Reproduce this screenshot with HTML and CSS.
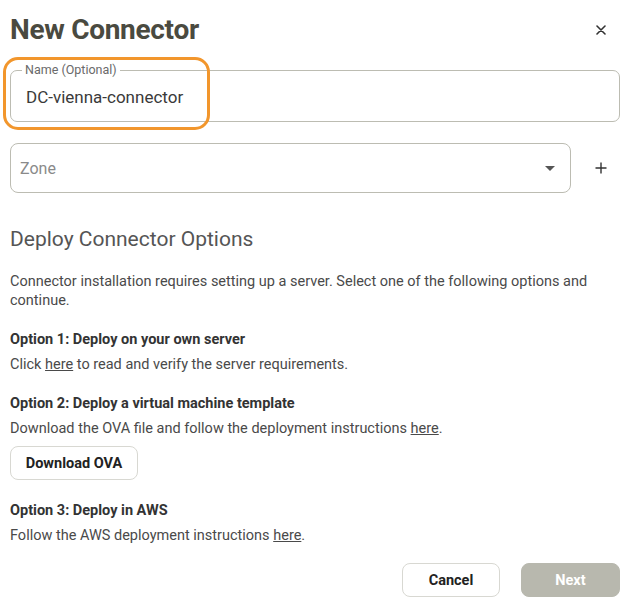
FILE: index.html
```html
<!DOCTYPE html>
<html lang="en">
<head>
<meta charset="utf-8">
<title>New Connector</title>
<link rel="stylesheet" href="styles.css">
</head>
<body>
<div class="dialog">
  <header class="header">
    <h1 class="title">New Connector</h1>
    <button class="close" aria-label="Close">
      <svg width="10" height="10" viewBox="0 0 10 10"><path d="M1 1L9 9M9 1L1 9" stroke="#333" stroke-width="1.6" stroke-linecap="round"/></svg>
    </button>
  </header>

  <div class="name-wrap">
    <fieldset class="field">
      <legend class="field-label">Name (Optional)</legend>
      <div class="field-value">DC-vienna-connector</div>
    </fieldset>
    <div class="highlight"></div>
  </div>

  <div class="zone-row">
    <div class="select">
      <span class="placeholder">Zone</span>
      <span class="caret"></span>
    </div>
    <button class="add" aria-label="Add zone">
      <svg width="12" height="12" viewBox="0 0 12 12"><path d="M6 0.5V11.5M0.5 6H11.5" stroke="#333" stroke-width="1.4"/></svg>
    </button>
  </div>

  <h2 class="section-title">Deploy Connector Options</h2>
  <p class="intro">Connector installation requires setting up a server. Select one of the following options and continue.</p>

  <h3 class="opt-title">Option 1: Deploy on your own server</h3>
  <p class="opt-text">Click <a href="#">here</a> to read and verify the server requirements.</p>

  <h3 class="opt-title">Option 2: Deploy a virtual machine template</h3>
  <p class="opt-text">Download the OVA file and follow the deployment instructions <a href="#">here</a>.</p>
  <button class="btn btn-outline download">Download OVA</button>

  <h3 class="opt-title opt-after-btn">Option 3: Deploy in AWS</h3>
  <p class="opt-text">Follow the AWS deployment instructions <a href="#">here</a>.</p>

  <footer class="actions">
    <button class="btn btn-outline cancel">Cancel</button>
    <button class="btn btn-disabled next">Next</button>
  </footer>
</div>
</body>
</html>
```

FILE: styles.css
```css
* { box-sizing: border-box; }
html, body { margin: 0; padding: 0; background: #fff; }
body {
  font-family: Roboto, "Liberation Sans", sans-serif;
  color: #4a4a4a;
}
.dialog {
  width: 630px;
  padding: 14px 10px 10px 10px;
}
.header {
  display: flex;
  align-items: center;
  justify-content: space-between;
  height: 32px;
}
.title {
  margin: 0;
  font-size: 28px;
  font-weight: 700;
  color: #4a4a40;
  line-height: 32px;
  letter-spacing: -0.3px;
}
.close, .add {
  border: 0;
  background: transparent;
  padding: 0;
  width: 20px;
  height: 20px;
  display: flex;
  align-items: center;
  justify-content: center;
}
.close { margin-right: 9px; }
.name-wrap {
  position: relative;
  margin-top: 17px;
}
.field {
  margin: 0;
  border: 1px solid #bcbcb2;
  border-radius: 7px;
  padding: 0 15px 14px 15px;
  min-width: 0;
}
.field-label {
  margin-left: -4px;
  padding: 0 3px;
  font-size: 12.5px;
  line-height: 14px;
  color: #6a6a6a;
}
.field-value {
  padding-top: 10px;
  font-size: 17px;
  line-height: 20px;
  color: #3a3a3a;
}
.highlight {
  position: absolute;
  left: -7px;
  top: -6px;
  width: 207px;
  height: 73px;
  border: 3px solid #f2962c;
  border-radius: 15px;
  pointer-events: none;
}
.zone-row {
  display: flex;
  align-items: center;
  margin-top: 21px;
}
.select {
  width: 561px;
  height: 50px;
  border: 1px solid #bcbcb2;
  border-radius: 8px;
  display: flex;
  align-items: center;
  justify-content: space-between;
  padding: 0 15px 0 9px;
}
.placeholder {
  font-size: 16px;
  color: #8a8a8a;
}
.caret {
  width: 0;
  height: 0;
  border-left: 5px solid transparent;
  border-right: 5px solid transparent;
  border-top: 5px solid #555;
}
.add {
  margin-left: 20px;
}
.section-title {
  margin: 32px 0 0 0;
  font-size: 21px;
  font-weight: 400;
  line-height: 28px;
  color: #555;
}
.intro {
  margin: 19px 0 0 0;
  font-size: 14.5px;
  line-height: 19px;
  color: #4a4a4a;
}
.opt-title {
  margin: 20px 0 0 0;
  font-size: 14.5px;
  line-height: 19px;
  font-weight: 700;
  color: #333;
}
.opt-after-btn { margin-top: 21px; }
.opt-text {
  margin: 6px 0 0 0;
  font-size: 14.5px;
  line-height: 19px;
  color: #4a4a4a;
}
.opt-text a { color: #4a4a4a; text-decoration: underline; }
.btn {
  height: 34px;
  border-radius: 8px;
  font-family: inherit;
  font-size: 14.5px;
  font-weight: 700;
  padding: 0;
}
.btn-outline {
  background: #fff;
  border: 1px solid #d8d8d2;
  color: #222;
}
.download {
  display: block;
  margin-top: 8px;
  width: 128px;
}
.actions {
  display: flex;
  justify-content: flex-end;
  gap: 21px;
  margin-top: 18px;
}
.cancel { width: 98px; }
.next {
  width: 99px;
  background: #b8b8ae;
  border: 1px solid #b8b8ae;
  color: #fff;
}
```
